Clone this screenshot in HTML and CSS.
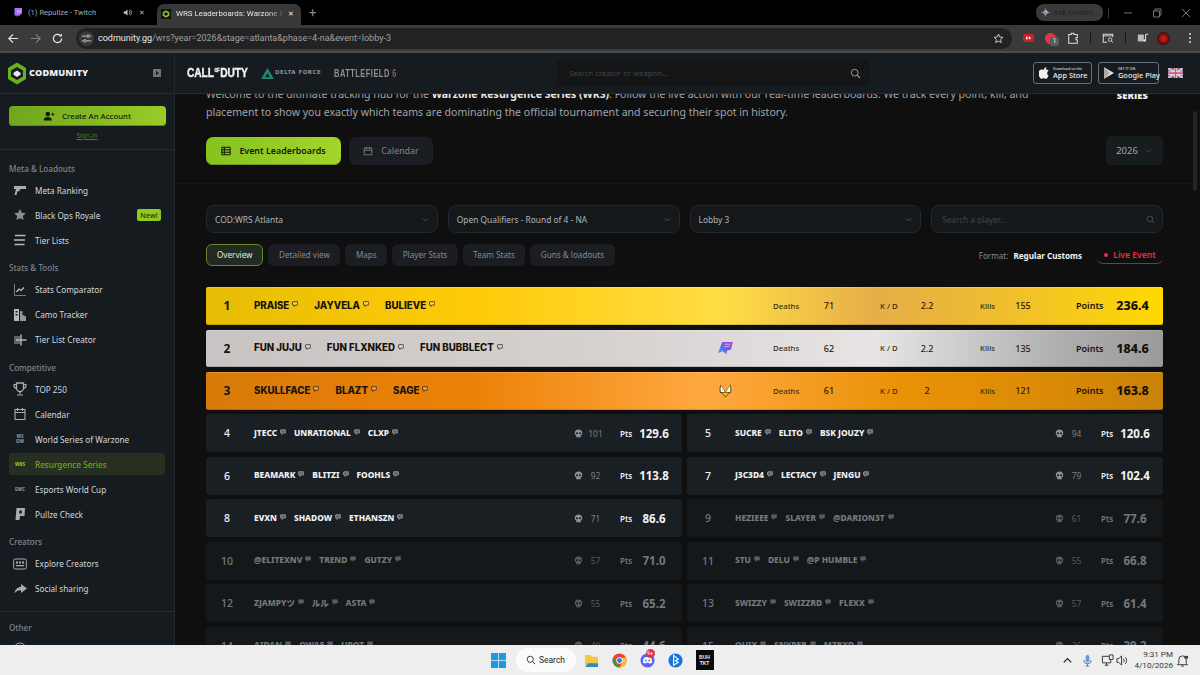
FILE: index.html
```html
<!DOCTYPE html>
<html lang="en">
<head>
  <meta charset="UTF-8">
  <title>WRS Leaderboards: Warzone Resurgence Series</title>
  <link rel="stylesheet" href="styles.css">
</head>
<body>
<svg class="defs" xmlns="http://www.w3.org/2000/svg">
  <symbol id="tw" viewBox="0 0 12 12"><path d="M2 1.500h8.500a1 1 0 0 1 1 1v4.500a1 1 0 0 1-1 1H6.500L4 10.800V8H2a1 1 0 0 1-1-1V2.500a1 1 0 0 1 1-1z" fill="#fff" fill-opacity=".3" stroke="currentColor" stroke-width="1.600"/></symbol>
  <symbol id="skull" viewBox="0 0 12 12"><path d="M6 .8C3 .8 1 2.800 1 5.300c0 1.600.8 2.800 2 3.400V11h6V8.700c1.200-.6 2-1.800 2-3.400C11 2.800 9 .8 6 .8z" fill="currentColor"/><circle cx="4" cy="5.600" r="1.300" fill="#15181b"/><circle cx="8" cy="5.600" r="1.300" fill="#15181b"/></symbol>
  <symbol id="chev" viewBox="0 0 12 12"><path d="M2.500 4.500 6 8l3.500-3.500" fill="none" stroke="currentColor" stroke-width="1.100"/></symbol>
  <symbol id="mag" viewBox="0 0 14 14"><circle cx="6" cy="6" r="4.300" fill="none" stroke="currentColor" stroke-width="1.200"/><path d="m9.200 9.200 3.600 3.600" stroke="currentColor" stroke-width="1.300"/></symbol>
</svg>

<header class="tabstrip">
  <div class="tab">
    <svg class="tab__icon" viewBox="0 0 12 12"><path d="M2 0h10v7L9 10H7l-2 2v-2H2z" fill="#a970ff"/><path d="M6 3h1v3H6zM9 3h1v3H9z" fill="#fff"/></svg>
    <span class="tab__title">(1) Repullze - Twitch</span>
    <svg class="tab__audio" viewBox="0 0 12 12"><path d="M1 4.500h2L6 2v8L3 7.500H1z" fill="#c8c8c8"/><path d="M8 3.500a3.500 3.500 0 0 1 0 5M9.500 2a5.500 5.500 0 0 1 0 8" stroke="#c8c8c8" fill="none"/></svg>
    <span class="tab__close">✕</span>
  </div>
  <div class="tab tab--active">
    <svg class="tab__icon" viewBox="0 0 12 12"><path d="M0 0h12v12H0z" fill="#111"/><path d="M6 1.500 10 3.800v4.400L6 10.500 2 8.200V3.800z" fill="#7dc21e"/><path d="M6 4 8 5.200v1.600L6 8 4 6.800V5.200z" fill="#111"/></svg>
    <span class="tab__title tab__title--fade">WRS Leaderboards: Warzone Resurgence</span>
    <span class="tab__close tab__close--on">✕</span>
  </div>
  <span class="tab-new">+</span>
  <div class="tabstrip__right">
    <div class="gemini">
      <svg class="gemini__star" viewBox="0 0 12 12"><path d="M6 0c.5 3.500 2.500 5.500 6 6-3.500.5-5.500 2.500-6 6-.5-3.500-2.500-5.500-6-6 3.500-.5 5.500-2.500 6-6z" fill="#6a9cf0"/><path d="M6 0c.5 3.500 2.500 5.500 6 6H6z" fill="#e9a93c"/><path d="M6 12c-.5-3.500-2.500-5.500-6-6h6z" fill="#d96a7a"/></svg>
      <span>Ask Gemini</span>
    </div>
    <span class="winsep"></span>
    <div class="winctl">
      <svg viewBox="0 0 10 10"><path d="M1 5h8" stroke="#777"/></svg>
      <svg viewBox="0 0 10 10"><path d="M1.500 3h6v6h-6zM3 3V1h6v6H7.500" fill="none" stroke="#777"/></svg>
      <svg viewBox="0 0 10 10"><path d="m1 1 8 8M9 1 1 9" stroke="#777"/></svg>
    </div>
  </div>
</header>

<div class="toolbar">
  <div class="toolbar__nav">
    <svg class="nav-ico" viewBox="0 0 14 14"><path d="M12 7H2.500M6.500 2.500 2 7l4.500 4.500" fill="none" stroke="#e6e6e6" stroke-width="1.300"/></svg>
    <svg class="nav-ico" viewBox="0 0 14 14"><path d="M2 7h9.500M7.500 2.500 12 7l-4.500 4.500" fill="none" stroke="#808080" stroke-width="1.300"/></svg>
    <svg class="nav-ico" viewBox="0 0 14 14"><path d="M11.500 7a4.500 4.500 0 1 1-1.300-3.200" fill="none" stroke="#e6e6e6" stroke-width="1.300"/><path d="M11.800 1.500v3.300H8.500z" fill="#e6e6e6"/></svg>
  </div>
  <div class="omnibox">
    <span class="omnibox__tune">
      <svg viewBox="0 0 14 14"><path d="M1 4h6M11 4h2M1 10h2M7 10h6" stroke="#ddd"/><circle cx="9" cy="4" r="1.600" fill="none" stroke="#ddd"/><circle cx="5" cy="10" r="1.600" fill="none" stroke="#ddd"/></svg>
    </span>
    <span class="omnibox__url"><b>codmunity.gg</b>/wrs?year=2026&amp;stage=atlanta&amp;phase=4-na&amp;event=lobby-3</span>
    <svg class="omnibox__star" viewBox="0 0 14 14"><path d="m7 1.500 1.700 3.600 3.900.5-2.900 2.700.8 3.900L7 10.300l-3.500 1.900.8-3.900L1.400 5.600l3.900-.5z" fill="none" stroke="#ddd" stroke-width="1.100"/></svg>
  </div>
  <div class="toolbar__ext">
    <svg class="ext-yt" viewBox="0 0 11 8"><rect width="11" height="8" rx="2" fill="#c8202c"/><path d="M3 2.200 5.200 4 3 5.800zM5.800 2.200 8 4 5.800 5.800z" fill="#fff"/></svg>
    <span class="ext-red"><i>1</i></span>
    <svg class="ext-ico" viewBox="0 0 14 14"><path d="M2 3h3V1.500h3V3h4v3.500h-1.500v2.500H12V13H2z" fill="none" stroke="#ddd" stroke-width="1.200"/></svg>
    <span class="ext-sep"></span>
    <svg class="ext-ico" viewBox="0 0 14 14"><path d="M6 12H1.500V2.500h11V6" fill="none" stroke="#ddd" stroke-width="1.200"/><path d="M1.500 4.500h11" stroke="#ddd"/><circle cx="9.500" cy="9" r="2" fill="none" stroke="#ddd"/><path d="m11 10.500 2 2" stroke="#ddd"/></svg>
    <span class="ext-sep"></span>
    <svg class="ext-ico" viewBox="0 0 14 14"><path d="M1 3h7v8H1z" fill="#bbb"/><path d="M10 10V3l3-.8" fill="none" stroke="#ddd" stroke-width="1.200"/><circle cx="9" cy="10" r="1.500" fill="#ddd"/></svg>
    <span class="ext-avatar"></span>
    <span class="ext-kebab"><i></i><i></i><i></i></span>
  </div>
</div>

<div class="app">
  <aside class="sidebar">
    <div class="brand">
      <svg class="brand__logo" viewBox="0 0 18 22"><path d="M9 0 18 5.500v11L9 22 0 16.500v-11z" fill="#6cae24"/><path d="M9 4.500 15 8v6l-6 3.500L3 14V8z" fill="#161b1f"/><path d="M9 8l3.500 2.200v2L9 14.500l-3.500-2.300v-2z" fill="#e8e8e8"/></svg>
      <span class="brand__name">CODMUNITY</span>
      <svg class="brand__collapse" viewBox="0 0 8 8"><path d="M0 0h8v8H0z" fill="#6d7378"/><path d="M3 2l3 2-3 2z" fill="#161b1f"/></svg>
    </div>
    <div class="account">
      <a class="account__create">
        <svg viewBox="0 0 14 12"><circle cx="5.500" cy="3.500" r="2.700" fill="#10180a"/><path d="M.5 11.500c0-3 2.200-4.300 5-4.300s5 1.300 5 4.300z" fill="#10180a"/><path d="M11.500 2v4M9.500 4h4" stroke="#10180a"/></svg>
        <span>Create An Account</span>
      </a>
      <a class="account__signin">Sign-in</a>
    </div>
    <nav class="nav">
      <h4 class="nav__label">Meta &amp; Loadouts</h4>
      <a class="nav__item"><svg viewBox="0 0 14 14"><path d="M1 3h12v3H8L6.500 7v1.500L4.500 8l-1 4H1.500L3 6H1z" fill="#a7adb1"/></svg><span>Meta Ranking</span></a>
      <a class="nav__item"><svg viewBox="0 0 14 14"><path d="m7 1 1.800 3.700 4 .6-2.900 2.800.7 4L7 10.200l-3.600 1.900.7-4L1.200 5.300l4-.6z" fill="#868c91"/></svg><span>Black Ops Royale</span><em class="nav__new">New!</em></a>
      <a class="nav__item"><svg viewBox="0 0 14 14"><path d="M2 2.500h10.500M1 7h11M1.500 11.500h10" stroke="#b5babd" stroke-width="1.400"/></svg><span>Tier Lists</span></a>

      <h4 class="nav__label">Stats &amp; Tools</h4>
      <a class="nav__item"><svg viewBox="0 0 14 14"><path d="M1.500 1v11.500H13" fill="none" stroke="#777d82"/><path d="m3.500 9 2.500-3 2 1.500 3-3" fill="none" stroke="#c4c8cb" stroke-width="1.200"/></svg><span>Stats Comparator</span></a>
      <a class="nav__item"><svg viewBox="0 0 14 14"><path d="M1 1h5v12H1z" fill="#b5babd"/><path d="M2.500 3h2v1.500h-2zM2.500 6h2v1.500h-2z" fill="#161b1f"/><path d="m7 3 3 .5-1 3 4 2V13H7z" fill="#8f959a"/></svg><span>Camo Tracker</span></a>
      <a class="nav__item"><svg viewBox="0 0 14 14"><path d="M1 3h6v8H1z" fill="#5d6367"/><path d="M8 1.500v11M3 7h10.500" stroke="#b5babd" stroke-width="1.400"/></svg><span>Tier List Creator</span></a>

      <h4 class="nav__label">Competitive</h4>
      <a class="nav__item"><svg viewBox="0 0 14 14"><path d="M3.500 1h7v5a3.500 3.500 0 0 1-7 0z" fill="none" stroke="#a7adb1" stroke-width="1.300"/><path d="M3.500 2.500H1C1 5 2 6.500 3.800 6.500M10.500 2.500H13c0 2.500-1 4-2.800 4M7 9.500V12M4 13h6" fill="none" stroke="#a7adb1" stroke-width="1.200"/></svg><span>TOP 250</span></a>
      <a class="nav__item"><svg viewBox="0 0 14 14"><path d="M2 2.500h10v10H2zM2 5.500h10M4.500 1v3M9.500 1v3" fill="none" stroke="#a7adb1" stroke-width="1.100"/></svg><span>Calendar</span></a>
      <a class="nav__item"><span class="nav__glyph">WS<br>OW</span><span>World Series of Warzone</span></a>
      <a class="nav__item nav__item--on"><span class="nav__glyph nav__glyph--on">WRS</span><span>Resurgence Series</span></a>
      <a class="nav__item"><span class="nav__glyph">EWC</span><span>Esports World Cup</span></a>
      <a class="nav__item"><svg viewBox="0 0 14 14"><path d="M3.500 1H12l-.5 8H7l-.5 4H2.500z" fill="#a7adb1"/><path d="M6.500 3.500h2.500l-.2 3H6.200z" fill="#161b1f"/></svg><span>Pullze Check</span></a>

      <h4 class="nav__label">Creators</h4>
      <a class="nav__item"><svg viewBox="0 0 14 14"><rect x=".7" y="2" width="12.600" height="10" rx="1.500" fill="none" stroke="#a7adb1"/><path d="M3 4.500h2v2H3zM6 4.500h2v2H6zM9 4.500h2v2H9zM3 8h8v1.200H3z" fill="#a7adb1"/></svg><span>Explore Creators</span></a>
      <a class="nav__item"><svg viewBox="0 0 14 14"><path d="M8 2l6 4.500L8 11V8.200C5 8.200 3 9.200 1.500 11.500 2 7.500 4.500 5 8 4.700z" fill="#a7adb1"/></svg><span>Social sharing</span></a>

      <div class="nav__rule"></div>
      <h4 class="nav__label nav__label--other">Other</h4>
      <a class="nav__item"><svg viewBox="0 0 14 14"><circle cx="7" cy="7" r="6" fill="none" stroke="#a7adb1"/></svg></a>
    </nav>
  </aside>

  <div class="content">
    <div class="topbar">
      <div class="games">
        <span class="games__cod">CALL<small>OF</small>DUTY</span>
        <span class="games__delta">
          <svg viewBox="0 0 14 12"><path d="M7 0 14 12H0z" fill="#1d8a70"/><path d="M7 5.500 9.500 10h-5z" fill="#161b1f"/></svg>
          <span>DELTA FORCE</span>
        </span>
        <span class="games__bf">BATTLEFIELD <b>6</b></span>
      </div>
      <div class="topsearch">
        <span>Search creator or weapon...</span>
        <svg viewBox="0 0 14 14"><use href="#mag"/></svg>
      </div>
      <div class="stores">
        <a class="store">
          <svg viewBox="0 0 12 14"><path d="M8.800 0c.1 1-.3 2-1 2.700-.6.700-1.500 1.100-2.300 1 0-1 .4-1.900 1-2.500C7.100.500 8 .1 8.800 0zM11.500 10.200c-.3.800-.5 1.100-1 1.800-.6 1-1.500 2-2.500 2-1 0-1.200-.6-2.500-.6S4.300 14 3.300 14c-1 0-1.800-1-2.500-2C-.9 9.400-1 6.300 0 4.700c.8-1.200 2-1.800 3.100-1.800S5 3.600 5.900 3.600s1.500-.7 2.900-.7c1 0 2.100.5 2.800 1.500-2.500 1.400-2.100 4.900-.1 5.800z" fill="#f0f0f0"/></svg>
          <span class="store__text"><small>Download on the</small><b>App Store</b></span>
        </a>
        <a class="store store--play">
          <svg viewBox="0 0 12 14"><path d="M0 0 12 7 0 14z" fill="#e0e0e0"/><path d="M0 0 7 7 0 14z" fill="#a8a8a8"/></svg>
          <span class="store__text"><small>GET IT ON</small><b>Google Play</b></span>
        </a>
      </div>
      <svg class="flag" viewBox="0 0 30 20"><path d="M0 0h30v20H0z" fill="#5a64b0"/><path d="m0 0 30 20M30 0 0 20" stroke="#f2f2f2" stroke-width="4"/><path d="m0 0 30 20M30 0 0 20" stroke="#d8566a" stroke-width="1.300"/><path d="M15 0v20M0 10h30" stroke="#f2f2f2" stroke-width="6.500"/><path d="M15 0v20M0 10h30" stroke="#d8566a" stroke-width="3.500"/></svg>
    </div>

    <main class="page">
      <section class="hero">
        <div class="hero__top">
          <p class="hero__text">Welcome to the ultimate tracking hub for the <b>Warzone Resurgence Series (WRS)</b>. Follow the live action with our real-time leaderboards. We track every point, kill, and placement to show you exactly which teams are dominating the official tournament and securing their spot in history.</p>
          <span class="hero__logo">SERIES</span>
        </div>
        <div class="hero__actions">
          <a class="btn btn--primary">
            <svg viewBox="0 0 12 12"><path d="M1 1.500h10v9H1zM1 4.500h10M1 7.500h10M4 1.500v9" fill="none" stroke="#10180a" stroke-width="1.200"/></svg>
            <span>Event Leaderboards</span>
          </a>
          <a class="btn btn--ghost">
            <svg viewBox="0 0 12 12"><path d="M1.500 2.500h9v8h-9zM1.500 5h9M4 1v2.500M8 1v2.500" fill="none" stroke="#80858a"/></svg>
            <span>Calendar</span>
          </a>
          <a class="year">2026 <svg viewBox="0 0 12 12"><use href="#chev"/></svg></a>
        </div>
      </section>

      <section class="board">
        <div class="filters">
          <div class="select"><span>COD:WRS Atlanta</span><svg viewBox="0 0 12 12"><use href="#chev"/></svg></div>
          <div class="select"><span>Open Qualifiers - Round of 4 - NA</span><svg viewBox="0 0 12 12"><use href="#chev"/></svg></div>
          <div class="select"><span>Lobby 3</span><svg viewBox="0 0 12 12"><use href="#chev"/></svg></div>
          <div class="select select--search"><span>Search a player...</span><svg viewBox="0 0 14 14"><use href="#mag"/></svg></div>
        </div>

        <div class="views">
          <a class="view view--on">Overview</a>
          <a class="view">Detailed view</a>
          <a class="view">Maps</a>
          <a class="view">Player Stats</a>
          <a class="view">Team Stats</a>
          <a class="view">Guns &amp; loadouts</a>
          <div class="views__meta">
            <span class="format">Format: <b>Regular Customs</b></span>
            <span class="live"><i></i>Live Event</span>
          </div>
        </div>

        <div class="podium">
          <div class="pod pod--gold">
            <span class="pod__rank">1</span>
            <div class="names names--wide">
              <span class="name">PRAISE<svg><use href="#tw"/></svg></span>
              <span class="name">JAYVELA<svg><use href="#tw"/></svg></span>
              <span class="name">BULIEVE<svg><use href="#tw"/></svg></span>
            </div>
            <div class="stat stat--deaths"><span class="stat__label">Deaths</span><span class="stat__val">71</span></div>
            <div class="stat stat--kd"><span class="stat__label">K / D</span><span class="stat__val">2.2</span></div>
            <div class="stat stat--kills"><span class="stat__label">Kills</span><span class="stat__val">155</span></div>
            <div class="pod__points"><span>Points</span><b>236.4</b></div>
          </div>
          <div class="pod pod--silver">
            <span class="pod__rank">2</span>
            <div class="names names--wide">
              <span class="name">FUN JUJU<svg><use href="#tw"/></svg></span>
              <span class="name">FUN FLXNKED<svg><use href="#tw"/></svg></span>
              <span class="name">FUN BUBBLECT<svg><use href="#tw"/></svg></span>
            </div>
            <svg class="pod__team" viewBox="0 0 16 13"><defs><linearGradient id="fg" x1="0" y1="1" x2="1" y2="0"><stop offset="0" stop-color="#35b0f0"/><stop offset=".5" stop-color="#6a5cf0"/><stop offset="1" stop-color="#c03ae0"/></linearGradient></defs><path d="M4.500 0H16l-2.500 8.500L10 8.800 9 13 4.500 10 0 12z" fill="url(#fg)"/><path d="M7 2.500h6.500M6.500 5h6" stroke="#d9d4d3" stroke-width=".8"/></svg>
            <div class="stat stat--deaths"><span class="stat__label">Deaths</span><span class="stat__val">62</span></div>
            <div class="stat stat--kd"><span class="stat__label">K / D</span><span class="stat__val">2.2</span></div>
            <div class="stat stat--kills"><span class="stat__label">Kills</span><span class="stat__val">135</span></div>
            <div class="pod__points"><span>Points</span><b>184.6</b></div>
          </div>
          <div class="pod pod--bronze">
            <span class="pod__rank">3</span>
            <div class="names names--wide">
              <span class="name">SKULLFACE<svg><use href="#tw"/></svg></span>
              <span class="name">BLAZT<svg><use href="#tw"/></svg></span>
              <span class="name">SAGE<svg><use href="#tw"/></svg></span>
            </div>
            <svg class="pod__team" viewBox="0 0 14 15"><path d="M7 14.500 3.500 10.500 1 9C.2 6 .5 3 2 .5 3 3 5 5 6.500 7.500L7 10l.5-2.500C9 5 11 3 12 .5 13.500 3 13.800 6 13 9l-2.500 1.500z" fill="#5a4410"/><path d="M6.300 8.500C5 5.500 3.200 4 2.300 2 1.500 4 1.500 6.500 2 8.500zM7.700 8.500C9 5.500 10.800 4 11.700 2c.8 2 .8 4.500.3 6.500z" fill="#fbf6ea"/><path d="M3.300 9.500h7.400L7 13.500z" fill="#ecc21a"/></svg>
            <div class="stat stat--deaths"><span class="stat__label">Deaths</span><span class="stat__val">61</span></div>
            <div class="stat stat--kd"><span class="stat__label">K / D</span><span class="stat__val">2</span></div>
            <div class="stat stat--kills"><span class="stat__label">Kills</span><span class="stat__val">121</span></div>
            <div class="pod__points"><span>Points</span><b>163.8</b></div>
          </div>
        </div>

        <div class="grid">
          <div class="row">
            <span class="row__rank">4</span>
            <div class="names"><span class="name">JTECC<svg><use href="#tw"/></svg></span><span class="name">UNRATIONAL<svg><use href="#tw"/></svg></span><span class="name">CLXP<svg><use href="#tw"/></svg></span></div>
            <svg class="row__skull"><use href="#skull"/></svg><span class="row__kills">101</span><span class="row__pts">Pts</span><b class="row__score">129.6</b>
          </div>
          <div class="row">
            <span class="row__rank">5</span>
            <div class="names"><span class="name">SUCRE<svg><use href="#tw"/></svg></span><span class="name">ELITO<svg><use href="#tw"/></svg></span><span class="name">BSK JOUZY<svg><use href="#tw"/></svg></span></div>
            <svg class="row__skull"><use href="#skull"/></svg><span class="row__kills">94</span><span class="row__pts">Pts</span><b class="row__score">120.6</b>
          </div>
          <div class="row">
            <span class="row__rank">6</span>
            <div class="names"><span class="name">BEAMARK<svg><use href="#tw"/></svg></span><span class="name">BLITZI<svg><use href="#tw"/></svg></span><span class="name">FOOHLS<svg><use href="#tw"/></svg></span></div>
            <svg class="row__skull"><use href="#skull"/></svg><span class="row__kills">92</span><span class="row__pts">Pts</span><b class="row__score">113.8</b>
          </div>
          <div class="row">
            <span class="row__rank">7</span>
            <div class="names"><span class="name">J3C3D4<svg><use href="#tw"/></svg></span><span class="name">LECTACY<svg><use href="#tw"/></svg></span><span class="name">JENGU<svg><use href="#tw"/></svg></span></div>
            <svg class="row__skull"><use href="#skull"/></svg><span class="row__kills">79</span><span class="row__pts">Pts</span><b class="row__score">102.4</b>
          </div>
          <div class="row">
            <span class="row__rank">8</span>
            <div class="names"><span class="name">EVXN<svg><use href="#tw"/></svg></span><span class="name">SHADOW<svg><use href="#tw"/></svg></span><span class="name">ETHANSZN<svg><use href="#tw"/></svg></span></div>
            <svg class="row__skull"><use href="#skull"/></svg><span class="row__kills">71</span><span class="row__pts">Pts</span><b class="row__score">86.6</b>
          </div>
          <div class="row row--dim">
            <span class="row__rank">9</span>
            <div class="names"><span class="name">HEZIEEE<svg><use href="#tw"/></svg></span><span class="name">SLAYER<svg><use href="#tw"/></svg></span><span class="name">@DARION3T<svg><use href="#tw"/></svg></span></div>
            <svg class="row__skull"><use href="#skull"/></svg><span class="row__kills">61</span><span class="row__pts">Pts</span><b class="row__score">77.6</b>
          </div>
          <div class="row row--dim">
            <span class="row__rank">10</span>
            <div class="names"><span class="name">@ELITEXNV<svg><use href="#tw"/></svg></span><span class="name">TREND<svg><use href="#tw"/></svg></span><span class="name">GUTZY<svg><use href="#tw"/></svg></span></div>
            <svg class="row__skull"><use href="#skull"/></svg><span class="row__kills">57</span><span class="row__pts">Pts</span><b class="row__score">71.0</b>
          </div>
          <div class="row row--dim">
            <span class="row__rank">11</span>
            <div class="names"><span class="name">STU<svg><use href="#tw"/></svg></span><span class="name">DELU<svg><use href="#tw"/></svg></span><span class="name">@P HUMBLE<svg><use href="#tw"/></svg></span></div>
            <svg class="row__skull"><use href="#skull"/></svg><span class="row__kills">55</span><span class="row__pts">Pts</span><b class="row__score">66.8</b>
          </div>
          <div class="row row--dim">
            <span class="row__rank">12</span>
            <div class="names"><span class="name name--cjk">ZJAMPYツ<svg><use href="#tw"/></svg></span><span class="name name--cjk">ルル<svg><use href="#tw"/></svg></span><span class="name">ASTA<svg><use href="#tw"/></svg></span></div>
            <svg class="row__skull"><use href="#skull"/></svg><span class="row__kills">55</span><span class="row__pts">Pts</span><b class="row__score">65.2</b>
          </div>
          <div class="row row--dim">
            <span class="row__rank">13</span>
            <div class="names"><span class="name">SWIZZY<svg><use href="#tw"/></svg></span><span class="name">SWIZZRD<svg><use href="#tw"/></svg></span><span class="name">FLEXX<svg><use href="#tw"/></svg></span></div>
            <svg class="row__skull"><use href="#skull"/></svg><span class="row__kills">57</span><span class="row__pts">Pts</span><b class="row__score">61.4</b>
          </div>
          <div class="row row--dim">
            <span class="row__rank">14</span>
            <div class="names"><span class="name">AIDAN<svg><use href="#tw"/></svg></span><span class="name">OWAF<svg><use href="#tw"/></svg></span><span class="name">UPOT<svg><use href="#tw"/></svg></span></div>
            <svg class="row__skull"><use href="#skull"/></svg><span class="row__kills">40</span><span class="row__pts">Pts</span><b class="row__score">44.6</b>
          </div>
          <div class="row row--dim">
            <span class="row__rank">15</span>
            <div class="names"><span class="name">QUIX<svg><use href="#tw"/></svg></span><span class="name">SNYPER<svg><use href="#tw"/></svg></span><span class="name">MZRXD<svg><use href="#tw"/></svg></span></div>
            <svg class="row__skull"><use href="#skull"/></svg><span class="row__kills">36</span><span class="row__pts">Pts</span><b class="row__score">39.2</b>
          </div>
        </div>
      </section>
    </main>
    <span class="scrollthumb"></span>
  </div>
</div>

<footer class="taskbar">
  <div></div>
  <div class="taskbar__mid">
    <svg class="tb-win" viewBox="0 0 16 16"><path d="M0 0h7.600v7.600H0zM8.400 0H16v7.600H8.400zM0 8.400h7.600V16H0zM8.400 8.400H16V16H8.400z" fill="#1a9be0"/></svg>
    <div class="tb-search"><svg viewBox="0 0 14 14"><use href="#mag"/></svg><span>Search</span></div>
    <svg class="tb-ico" viewBox="0 0 16 16"><path d="M1 2h6l1.500 2H15v11H1z" fill="#f2c744"/><path d="M4 11h11v4H2z" fill="#1f8fd0"/></svg>
    <svg class="tb-ico" viewBox="0 0 16 16"><circle cx="8" cy="8" r="7.500" fill="#e3452f"/><path d="M1.500 4.500 5 11l3 4.500A7.500 7.500 0 0 1 1.500 4.500z" fill="#2f9e4f"/><path d="M8 5h6.800A7.500 7.500 0 0 1 8 15.500L11 10z" fill="#f6c22c"/><circle cx="8" cy="8" r="3.400" fill="#fff"/><circle cx="8" cy="8" r="2.600" fill="#2a7de1"/></svg>
    <span class="tb-discord">
      <svg class="tb-ico" viewBox="0 0 16 16"><circle cx="8" cy="8" r="7.500" fill="#5865f2"/><path d="M4 5c2.500-1 5.500-1 8 0l1 5c-1 .8-2 1.200-3 1.300l-.6-1H6.600l-.6 1c-1-.1-2-.5-3-1.300z" fill="#fff"/><circle cx="6.200" cy="8" r="1" fill="#5865f2"/><circle cx="9.800" cy="8" r="1" fill="#5865f2"/></svg>
      <i>9+</i>
    </span>
    <svg class="tb-ico" viewBox="0 0 16 16"><circle cx="8" cy="8" r="7.500" fill="#1273d8"/><path d="M6 2.500v10.500l5-3.200-3-1.500L11 6.500z" fill="none" stroke="#fff" stroke-width="1.200"/></svg>
    <span class="tb-box">BUH<br>TKT</span>
  </div>
  <div class="taskbar__tray">
    <svg class="tray-ico" viewBox="0 0 14 14"><path d="m3 9 4-4 4 4" fill="none" stroke="#222" stroke-width="1.300"/></svg>
    <svg class="tray-ico" viewBox="0 0 14 14"><rect x="5" y="1" width="4" height="8" rx="2" fill="#6d93d8"/><path d="M3 6.500a4 4 0 0 0 8 0M7 10.500V13M5 13h4" fill="none" stroke="#4a6fb8"/></svg>
    <svg class="tray-ico tray-ico--mon" viewBox="0 0 14 14"><path d="M1.500 2.500h9v7h-9zM4 12h4M6 9.500V12" fill="none" stroke="#333"/><path d="M9 1h4v5H9z" fill="#eee" stroke="#333"/></svg>
    <svg class="tray-ico" viewBox="0 0 14 14"><path d="M1 5h2l3-3v10L3 9H1z" fill="none" stroke="#333"/><path d="M8 5a3 3 0 0 1 0 4M10 3.500a5 5 0 0 1 0 7" fill="none" stroke="#333"/></svg>
    <div class="clock"><span>9:31 PM</span><span>4/10/2026</span></div>
    <svg class="tray-ico" viewBox="0 0 14 14"><path d="M3 10V6a4 4 0 0 1 8 0v4l1.500 1.500h-11zM5.500 13h3" fill="none" stroke="#333"/><path d="M9 2h4v3H9z" fill="#444"/></svg>
  </div>
</footer>
</body>
</html>
```

FILE: styles.css
```css
* {
  margin: 0;
  padding: 0;
  box-sizing: border-box;
}

:root {
  --bg: #0f0f10;
  --panel: #161b1f;
  --line: #262c30;
  --green: #8ccb1f;
  --ui: "Noto Sans", "Open Sans", sans-serif;
  --chrome: Roboto, "Liberation Sans", sans-serif;
}

html, body {
  width: 1200px;
  height: 675px;
  overflow: hidden;
}

body {
  display: flex;
  flex-direction: column;
  background: var(--bg);
  font-family: var(--ui);
  font-size: 9.5px;
  color: #d5d8da;
}

a { color: inherit; text-decoration: none; }
b { font-weight: 700; }
em, i { font-style: normal; }

.defs {
  display: none;
}

/* browser chrome */
.tabstrip {
  height: 25px;
  flex: none;
  background: #000;
  display: flex;
  align-items: flex-end;
  padding-left: 11px;
  font-family: var(--chrome);
}

.tab {
  width: 146px;
  height: 25px;
  display: flex;
  align-items: center;
  padding: 0 8px 0 2px;
  color: #a8a8a8;
  font-size: 7.6px;
}

.tab--active {
  width: 144px;
  height: 21px;
  margin-right: 5px;
  padding: 0 3px 2px 4px;
  background: #383838;
  border-radius: 7px 7px 0 0;
  color: #e6e6e6;
  font-size: 7.9px;
}

.tab__icon {
  width: 9px;
  height: 9px;
  flex: none;
  margin-right: 6px;
}

.tab--active .tab__icon {
  width: 10px;
  height: 10px;
  margin-right: 5px;
}

.tab__title {
  flex: 1;
  white-space: nowrap;
  overflow: hidden;
}

.tab__title--fade {
  -webkit-mask-image: linear-gradient(90deg, #000 85%, transparent 100%);
  mask-image: linear-gradient(90deg, #000 85%, transparent 100%);
}

.tab__audio {
  width: 9px;
  height: 9px;
  flex: none;
  margin-right: 3px;
}

.tab__close {
  font-size: 7px;
  color: #b0b0b0;
  margin: 0 4px;
}

.tab__close--on { color: #eee; }

.tab-new {
  color: #8a8a8a;
  font-size: 13px;
  line-height: 25px;
  height: 25px;
  margin-left: 3px;
}

.tabstrip__right {
  margin-left: auto;
  height: 25px;
  display: flex;
  align-items: center;
}

.gemini {
  width: 67px;
  height: 17px;
  border-radius: 8px;
  background: #3a3a3a;
  display: flex;
  align-items: center;
  gap: 3px;
  padding-left: 5px;
  color: #262626;
  font-size: 7.8px;
  font-weight: 500;
  white-space: nowrap;
}

.gemini__star {
  width: 9px;
  height: 9px;
  flex: none;
}

.winsep {
  width: 1px;
  height: 10px;
  background: #3a3a3a;
  margin: 0 14px 0 5px;
}

.winctl {
  display: flex;
  gap: 19px;
  padding-right: 9px;
}

.winctl svg {
  width: 10px;
  height: 10px;
}

.toolbar {
  height: 28px;
  flex: none;
  background: #3a3a3a;
  border-bottom: 2px solid #4a4a4a;
  display: flex;
  align-items: center;
  padding: 0 8px 0 7px;
  font-family: var(--chrome);
}

.toolbar__nav {
  display: flex;
  gap: 9px;
  width: 69px;
}

.nav-ico {
  width: 13px;
  height: 13px;
}

.omnibox {
  width: 936px;
  height: 21px;
  flex: none;
  border-radius: 11px;
  background: #222;
  display: flex;
  align-items: center;
  padding: 0 8px 0 3px;
  font-size: 9px;
  color: #a0a0a0;
}

.omnibox__tune {
  width: 15px;
  height: 15px;
  border-radius: 50%;
  background: #3a3a3a;
  padding: 2px;
  display: flex;
  margin-right: 4px;
}

.omnibox__url {
  flex: 1;
  white-space: nowrap;
}

.omnibox__url b {
  color: #e8e8e8;
  font-weight: 400;
}

.omnibox__star {
  width: 11px;
  height: 11px;
}

.toolbar__ext {
  flex: 1;
  display: flex;
  align-items: center;
  gap: 11px;
  padding-left: 11px;
}

.ext-yt {
  width: 11px;
  height: 8px;
  flex: none;
}

.ext-red {
  width: 11px;
  height: 11px;
  border-radius: 50%;
  background: #e2344c;
  position: relative;
}

.ext-red i {
  position: absolute;
  left: 5px;
  top: 4px;
  width: 9px;
  height: 9px;
  background: #5c5c5c;
  border-radius: 2px;
  color: #eee;
  font-size: 6.5px;
  line-height: 9px;
  text-align: center;
}

.ext-ico {
  width: 12px;
  height: 12px;
  flex: none;
}

.ext-sep {
  width: 1px;
  height: 10px;
  background: #161616;
}

.ext-avatar {
  width: 13px;
  height: 13px;
  margin-left: -3px;
  border-radius: 50%;
  background: radial-gradient(circle, #c81818 20%, #300808 75%);
}

.ext-kebab {
  display: flex;
  flex-direction: column;
  gap: 2px;
  margin-left: 8px;
}

.ext-kebab i {
  width: 2px;
  height: 2px;
  border-radius: 50%;
  background: #ddd;
}

/* app */
.app {
  flex: 1;
  min-height: 0;
  display: flex;
  overflow: hidden;
}

.sidebar {
  width: 175px;
  flex: none;
  background: var(--panel);
  border-right: 1px solid #22282c;
  overflow: hidden;
}

.brand {
  height: 41px;
  display: flex;
  align-items: center;
  padding-left: 8px;
  border-bottom: 1px solid var(--line);
}

.brand__logo {
  width: 18px;
  height: 23px;
}

.brand__name {
  margin-left: 3px;
  font: 800 9.2px/1 "Open Sans", sans-serif;
  letter-spacing: .1px;
  color: #eef0f1;
}

.brand__collapse {
  width: 8px;
  height: 8px;
  margin-left: auto;
  margin-right: 13px;
}

.account {
  height: 56px;
  padding: 12px 9px 0;
  display: flex;
  flex-direction: column;
  align-items: center;
  border-bottom: 1px solid var(--line);
}

.account__create {
  width: 157px;
  height: 20px;
  flex: none;
  border-radius: 4px;
  background: linear-gradient(90deg, #6ea61c, #9acb2a);
  box-shadow: inset 0 -1px 0 #5e8d18;
  display: flex;
  align-items: center;
  justify-content: center;
  gap: 7px;
  color: #10180a;
  font-size: 7.8px;
  font-weight: 500;
}

.account__create svg {
  width: 12px;
  height: 10px;
}

.account__signin {
  margin-top: 5px;
  color: #4f7a1a;
  font-size: 6.5px;
  text-decoration: underline;
}

.nav {
  padding: 3px 9px 0;
}

.nav__label {
  height: 16px;
  margin-top: 7.5px;
  margin-bottom: 1px;
  line-height: 16px;
  font-size: 8.1px;
  font-weight: 500;
  color: #7f868b;
}

.nav__item {
  height: 25px;
  display: flex;
  align-items: center;
  gap: 8px;
  padding: 0 4px;
  color: #d5d8da;
  font-size: 8.2px;
  border-radius: 3px;
}

.nav__item svg,
.nav__glyph {
  width: 14px;
  height: 14px;
  flex: none;
}

.nav__glyph {
  display: flex;
  align-items: center;
  justify-content: center;
  text-align: center;
  font-size: 4.5px;
  font-weight: 800;
  line-height: 1.1;
  color: #8f959a;
}

.nav__glyph--on { color: var(--green); }

.nav__item--on {
  height: 22px;
  margin: 1.5px 0;
  background: #262f20;
  color: #6ea61c;
  font-weight: 500;
}

.nav__new {
  margin-left: auto;
  width: 24px;
  height: 12px;
  border-radius: 2px;
  background: #8ccb1f;
  color: #23330a;
  font-size: 7.2px;
  font-weight: 500;
  line-height: 12px;
  text-align: center;
}

.nav__rule {
  height: 1px;
  background: var(--line);
  margin: 9.5px -9px 0;
}

.nav__label--other {
  margin-top: 8px;
}

/* main area */
.content {
  flex: 1;
  min-width: 0;
  display: flex;
  flex-direction: column;
  position: relative;
}

.topbar {
  height: 41px;
  flex: none;
  background: var(--panel);
  border-bottom: 1px solid var(--line);
  display: flex;
  align-items: center;
  padding-left: 12px;
  position: relative;
  z-index: 2;
}

.games {
  width: 370px;
  display: flex;
  align-items: center;
}

.games__cod {
  width: 60px;
  font: 700 13.5px/1 "Liberation Sans", sans-serif;
  color: #f2f2f2;
  -webkit-text-stroke: .4px #f2f2f2;
  white-space: nowrap;
  letter-spacing: -.2px;
  transform: scaleX(.76);
  transform-origin: left center;
}

.games__cod small {
  font-size: 5px;
  vertical-align: 5px;
  margin: 0 1px;
}

.games__delta {
  display: flex;
  align-items: center;
  margin-left: 14px;
  color: #8b9093;
  font: 700 5.5px/1 "DejaVu Sans", sans-serif;
  letter-spacing: .5px;
  white-space: nowrap;
}

.games__delta svg {
  width: 13px;
  height: 11px;
  margin-right: 1px;
}

.games__bf {
  width: 61px;
  margin-left: 13px;
  font: 700 11px/1 "Liberation Sans", sans-serif;
  letter-spacing: .7px;
  color: #8d9194;
  white-space: nowrap;
  transform: scaleX(.68);
  transform-origin: left center;
}

.games__bf b { color: #9a5a3a; }

.topsearch {
  width: 312px;
  height: 26px;
  background: #141516;
  display: flex;
  align-items: center;
  justify-content: space-between;
  padding: 0 8px 0 12px;
  color: #41464a;
  font-size: 7.7px;
}

.topsearch svg {
  width: 11px;
  height: 11px;
  color: #a0a4a7;
}

.stores {
  margin-left: 164px;
  display: flex;
  gap: 6px;
}

.store {
  width: 59px;
  height: 22px;
  border: 1px solid #6b7074;
  border-radius: 3px;
  display: flex;
  align-items: center;
  gap: 4px;
  padding-left: 5px;
  color: #eee;
}

.store--play { width: 61px; }

.store svg {
  width: 10px;
  height: 12px;
  flex: none;
}

.store__text {
  display: flex;
  flex-direction: column;
  line-height: 1;
  white-space: nowrap;
}

.store__text small { font-size: 3.6px; }
.store__text b { font-size: 7.4px; font-weight: 500; margin-top: 1px; }

.flag {
  width: 15px;
  height: 10px;
  margin-left: 9px;
}

.page {
  flex: 1;
  min-height: 0;
  overflow: hidden;
  padding-left: 31px;
  padding-right: 37px;
}

.hero {
  height: 99px;
  margin: 0 -37px 0 -31px;
  padding: 0 37px 0 31px;
  border-bottom: 1px solid #161718;
}

.hero__top {
  display: flex;
  justify-content: space-between;
  margin-top: -9px;
}

.hero__text {
  width: 835px;
  font: 400 10.55px/18px "Noto Sans", sans-serif;
  color: #a0a5a9;
}

.hero__text b { color: #e6e8e9; }

.hero__logo {
  margin-top: 2px;
  margin-right: 15px;
  font: 800 9.5px/18px "Open Sans", sans-serif;
  color: #f2f2f2;
}

.hero__actions {
  margin-top: 15px;
  display: flex;
  align-items: center;
  gap: 8px;
}

.btn {
  height: 28px;
  border-radius: 7px;
  display: flex;
  align-items: center;
  justify-content: center;
  gap: 8px;
  font-size: 8.9px;
}

.btn svg {
  width: 10px;
  height: 10px;
}

.btn--primary {
  width: 135px;
  background: linear-gradient(90deg, #86c21f, #a3d52c);
  box-shadow: inset 0 -1px 0 #6c9c1a;
  color: #10180a;
  font-weight: 600;
}

.btn--ghost {
  width: 84px;
  background: #1a1d22;
  color: #80858a;
}

.year {
  margin-left: auto;
  width: 57px;
  height: 29px;
  border-radius: 5px;
  background: #171c1f;
  display: flex;
  align-items: center;
  justify-content: center;
  gap: 6px;
  color: #a0a5a9;
  font-size: 9.5px;
}

.year svg {
  width: 9px;
  height: 9px;
  color: #4a5054;
}

.filters {
  margin-top: 21px;
  display: grid;
  grid-template-columns: repeat(4, 1fr);
  gap: 10px;
}

.select {
  height: 28px;
  border: 1px solid #22282c;
  border-radius: 8px;
  background: #14181b;
  display: flex;
  align-items: center;
  justify-content: space-between;
  padding: 0 7px 0 8px;
  font-size: 8.4px;
  color: #b0b5b8;
}

.select svg {
  width: 9px;
  height: 9px;
  color: #555b5f;
}

.select--search {
  color: #41464a;
  font-size: 8.2px;
  padding-left: 10px;
}

.views {
  margin-top: 11px;
  height: 22px;
  display: flex;
  align-items: center;
  gap: 5px;
}

.view {
  height: 22px;
  padding: 0 10.5px;
  border-radius: 6px;
  background: #1a1d22;
  color: #858a8e;
  font-size: 8.15px;
  line-height: 22px;
  white-space: nowrap;
}

.view--on {
  background: #222b22;
  border: 1px solid #5f8a26;
  color: #e2e5e6;
  line-height: 20px;
  padding: 0 10px;
}

.views__meta {
  margin-left: auto;
  display: flex;
  align-items: center;
  gap: 15px;
}

.format {
  color: #868b8f;
  font-size: 8.1px;
}

.format b {
  color: #f2f3f3;
  margin-left: 3px;
}

.live {
  height: 17px;
  width: 66px;
  border-bottom: 1px solid #b21e2c;
  border-radius: 0 0 6px 6px;
  display: flex;
  align-items: center;
  justify-content: center;
  gap: 5px;
  color: #e8303f;
  font-size: 8.6px;
  font-weight: 600;
}

.live i {
  width: 4px;
  height: 4px;
  border-radius: 50%;
  background: #e8303f;
}

/* leaderboard */
.podium {
  margin-top: 21px;
  display: flex;
  flex-direction: column;
  gap: 5px;
}

.pod {
  height: 37.5px;
  border-radius: 2px;
  display: flex;
  align-items: center;
  color: #17120a;
  box-shadow: inset 0 1px 0 rgba(255,255,255,.18), inset 0 -1px 0 rgba(0,0,0,.14);
}

.pod--gold {
  background: linear-gradient(90deg, #e6bd05 0, #ffcb08 28%, #ffdd45 54%, #e6ae48 70%, #f0bf2c 84%, #ffd900 100%);
}

.pod--silver {
  background: linear-gradient(90deg, #c9c4c3 0, #d6d0cf 40%, #e8e4e4 70%, #cfcfcf 78%, #adadad 90%, #9a9a9a 100%);
}

.pod--bronze {
  background: linear-gradient(90deg, #d87a08 0, #ec8208 28%, #ffa840 52%, #ea9208 72%, #dd8c06 86%, #c98208 100%);
}

.pod__rank {
  width: 42px;
  flex: none;
  text-align: center;
  font-size: 12px;
  font-weight: 700;
}

.names {
  flex: 1;
  min-width: 0;
  display: flex;
  align-items: center;
  gap: 8px;
  padding-left: 6px;
}

.names--wide { gap: 16px; }

.name {
  display: flex;
  align-items: center;
  font: 800 8.4px/1 "Noto Sans", sans-serif;
  white-space: nowrap;
}

.names--wide .name {
  font-family: Inter, "Noto Sans", sans-serif;
  font-size: 9.7px;
}

.name svg {
  width: 6px;
  height: 6px;
  margin: -3px 0 0 3px;
  flex: none;
  color: #9aa0a4;
}

.pod .name svg { color: #2a2420; }

.name--cjk { font-family: "Noto Sans", "Noto Sans CJK JP", sans-serif; }

.pod__team {
  width: 15px;
  height: 14px;
  flex: none;
  margin-right: 40px;
}

.pod--gold .names { margin-right: 55px; }

.stat {
  display: flex;
  align-items: center;
  flex: none;
}

.stat--deaths { width: 107px; }
.stat--kd { width: 100px; }
.stat--kills { width: 96px; }

.stat__label {
  font-size: 7.8px;
  font-weight: 500;
  color: #3c2f14;
}

.stat--deaths .stat__label { width: 37px; }
.stat--kd .stat__label { width: 28px; }
.stat--kills .stat__label { width: 24px; }

.stat__val {
  width: 38px;
  text-align: center;
  font-size: 9px;
  font-weight: 500;
  color: #2a2008;
}

.pod__points {
  width: 87px;
  flex: none;
  display: flex;
  align-items: center;
  font-size: 9px;
  font-weight: 600;
}

.pod__points span { width: 33px; }

.pod__points b {
  width: 47px;
  text-align: center;
  font-size: 12.5px;
  font-weight: 800;
}

.grid {
  margin-top: 4.5px;
  display: grid;
  grid-template-columns: repeat(2, 1fr);
  gap: 4.5px 5px;
}

.row {
  height: 38px;
  border-radius: 3px;
  background: #1a1f24;
  display: flex;
  align-items: center;
  color: #f2f3f3;
}

.row__rank {
  width: 42px;
  flex: none;
  text-align: center;
  font-size: 10.5px;
  font-weight: 500;
}

.row__skull {
  width: 9px;
  height: 9px;
  flex: none;
  margin-right: 1px;
  color: #8d9296;
}

.row__kills {
  width: 24px;
  flex: none;
  text-align: center;
  font-size: 8.4px;
  color: #7d8286;
}

.row__pts {
  width: 14px;
  margin-left: 12.5px;
  flex: none;
  font-size: 8px;
  font-weight: 600;
}

.row__score {
  width: 40px;
  margin-right: 8px;
  flex: none;
  text-align: center;
  font-size: 11.5px;
  font-weight: 700;
}

.row--dim {
  background: #15181b;
  color: #74797d;
}

.row--dim .row__skull { color: #565b5f; }
.row--dim .row__kills { color: #565b5f; }
.row--dim .name svg { color: #50555a; }

.scrollthumb {
  position: absolute;
  right: 3px;
  top: 58px;
  width: 4px;
  height: 80px;
  border-radius: 2px;
  background: #222426;
}

/* windows taskbar */
.taskbar {
  height: 30px;
  flex: none;
  background: #eeeeee;
  display: grid;
  grid-template-columns: 1fr auto 1fr;
  align-items: center;
  color: #222;
  font-family: var(--chrome);
}

.taskbar__mid {
  display: flex;
  align-items: center;
  margin-left: 4px;
}

.tb-win {
  width: 15px;
  height: 15px;
  margin-right: 10px;
}

.tb-search {
  width: 60px;
  height: 24px;
  border-radius: 12px;
  background: #fbfbfb;
  display: flex;
  align-items: center;
  justify-content: center;
  gap: 3px;
  font-size: 8.5px;
  margin-right: 8px;
}

.tb-search svg {
  width: 10px;
  height: 10px;
}

.tb-ico {
  width: 15px;
  height: 15px;
  margin-right: 13px;
  display: block;
}

.tb-discord {
  position: relative;
  display: block;
}

.tb-discord i {
  position: absolute;
  left: 6px;
  top: -4px;
  width: 9px;
  height: 9px;
  border-radius: 50%;
  background: #d8394a;
  color: #fff;
  font-size: 5.5px;
  line-height: 9px;
  text-align: center;
}

.tb-box {
  width: 18px;
  height: 20px;
  background: #0a0a0a;
  color: #eee;
  font: 800 5px/6px "Liberation Sans", sans-serif;
  padding: 4px 1px;
  text-align: center;
}

.taskbar__tray {
  display: flex;
  align-items: center;
  justify-content: flex-end;
  gap: 7px;
  padding-right: 11px;
}

.tray-ico {
  width: 13px;
  height: 13px;
  flex: none;
}

.tray-ico--mon { margin-right: -5px; }

.clock {
  display: flex;
  flex-direction: column;
  align-items: flex-end;
  margin: 0 -4px 0 -2px;
  font-size: 8.1px;
  line-height: 11px;
  color: #333;
}
```
